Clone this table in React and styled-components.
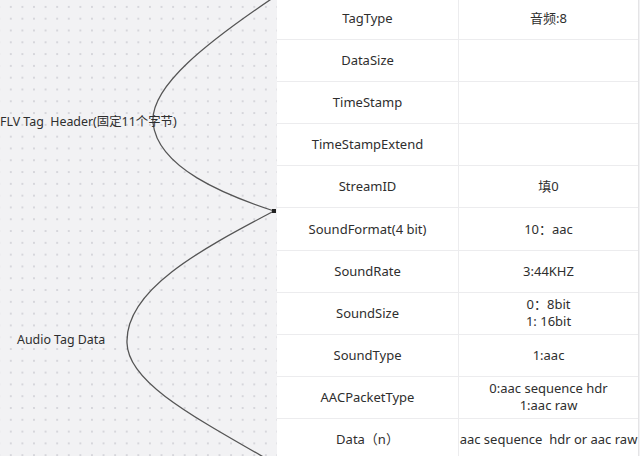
import React from 'react';
import styled, { createGlobalStyle } from 'styled-components';

const GlobalStyle = createGlobalStyle`
  html, body {
    margin: 0;
    padding: 0;
    background: #f2f2f4;
    overflow: hidden;
  }
  body {
    font-family: "Noto Sans", "Noto Sans CJK SC", sans-serif;
    color: #333;
  }
`;

const Page = styled.div`
  display: flex;
  width: 640px;
  height: 456px;
  overflow: hidden;
  background-color: #f2f2f4;
  background-image: radial-gradient(circle, #d6d6db 0.8px, transparent 1.2px);
  background-size: 11.6px 11.8px;
  background-position: 5px 1px;
`;

const Canvas = styled.div`
  position: relative;
  width: 277px;
  flex-shrink: 0;
`;

const Curves = styled.svg`
  position: absolute;
  left: 0;
  top: 0;
`;

const NodeLabel = styled.div`
  position: absolute;
  left: ${(p) => p.$x}px;
  top: ${(p) => p.$y}px;
  font-size: 12.4px;
  line-height: 18px;
  white-space: pre;
  color: #2e2e2e;
`;

const Table = styled.div`
  width: 361px;
  margin-top: -2px;
  background: #fff;
  border-right: 1px solid #e4e4e6;
  flex-shrink: 0;
  align-self: flex-start;
`;

const Row = styled.div`
  display: grid;
  grid-template-columns: 181px 180px;
  height: 42.1px;
  border-bottom: 1px solid #ececee;
  box-sizing: border-box;
`;

const Cell = styled.div`
  display: flex;
  flex-direction: column;
  align-items: center;
  justify-content: center;
  text-align: center;
  font-size: 13px;
  line-height: 17px;
  color: #2e2e2e;
  white-space: pre;
  border-left: ${(p) => (p.$divider ? '1px solid #ececee' : 'none')};
`;

const rows = [
  ['TagType', '音频:8'],
  ['DataSize', ''],
  ['TimeStamp', ''],
  ['TimeStampExtend', ''],
  ['StreamID', '填0'],
  ['SoundFormat(4 bit)', '10：aac'],
  ['SoundRate', '3:44KHZ'],
  ['SoundSize', '0：8bit\n1: 16bit'],
  ['SoundType', '1:aac'],
  ['AACPacketType', '0:aac sequence hdr\n1:aac raw'],
  ['Data（n）', 'aac sequence  hdr or aac raw'],
];

export default function App() {
  return (
    <>
      <GlobalStyle />
      <Page>
        <Canvas>
          <Curves width="277" height="456" viewBox="0 0 277 456">
            <path
              d="M 274 211 C 225 195, 158 168, 153 123 C 150 88, 200 45, 300 -20"
              fill="none"
              stroke="#555"
              strokeWidth="1.3"
            />
            <path
              d="M 274 211 C 200 250, 125 290, 127 343 C 128 385, 200 420, 300 478"
              fill="none"
              stroke="#555"
              strokeWidth="1.3"
            />
            <rect x="272" y="209" width="4" height="4" fill="#222" />
          </Curves>
          <NodeLabel $x={0} $y={113}>FLV Tag  Header(固定11个字节)</NodeLabel>
          <NodeLabel $x={17} $y={331}>Audio Tag Data</NodeLabel>
        </Canvas>
        <Table>
          {rows.map(([name, value]) => (
            <Row key={name}>
              <Cell>{name}</Cell>
              <Cell $divider>{value}</Cell>
            </Row>
          ))}
        </Table>
      </Page>
    </>
  );
}
